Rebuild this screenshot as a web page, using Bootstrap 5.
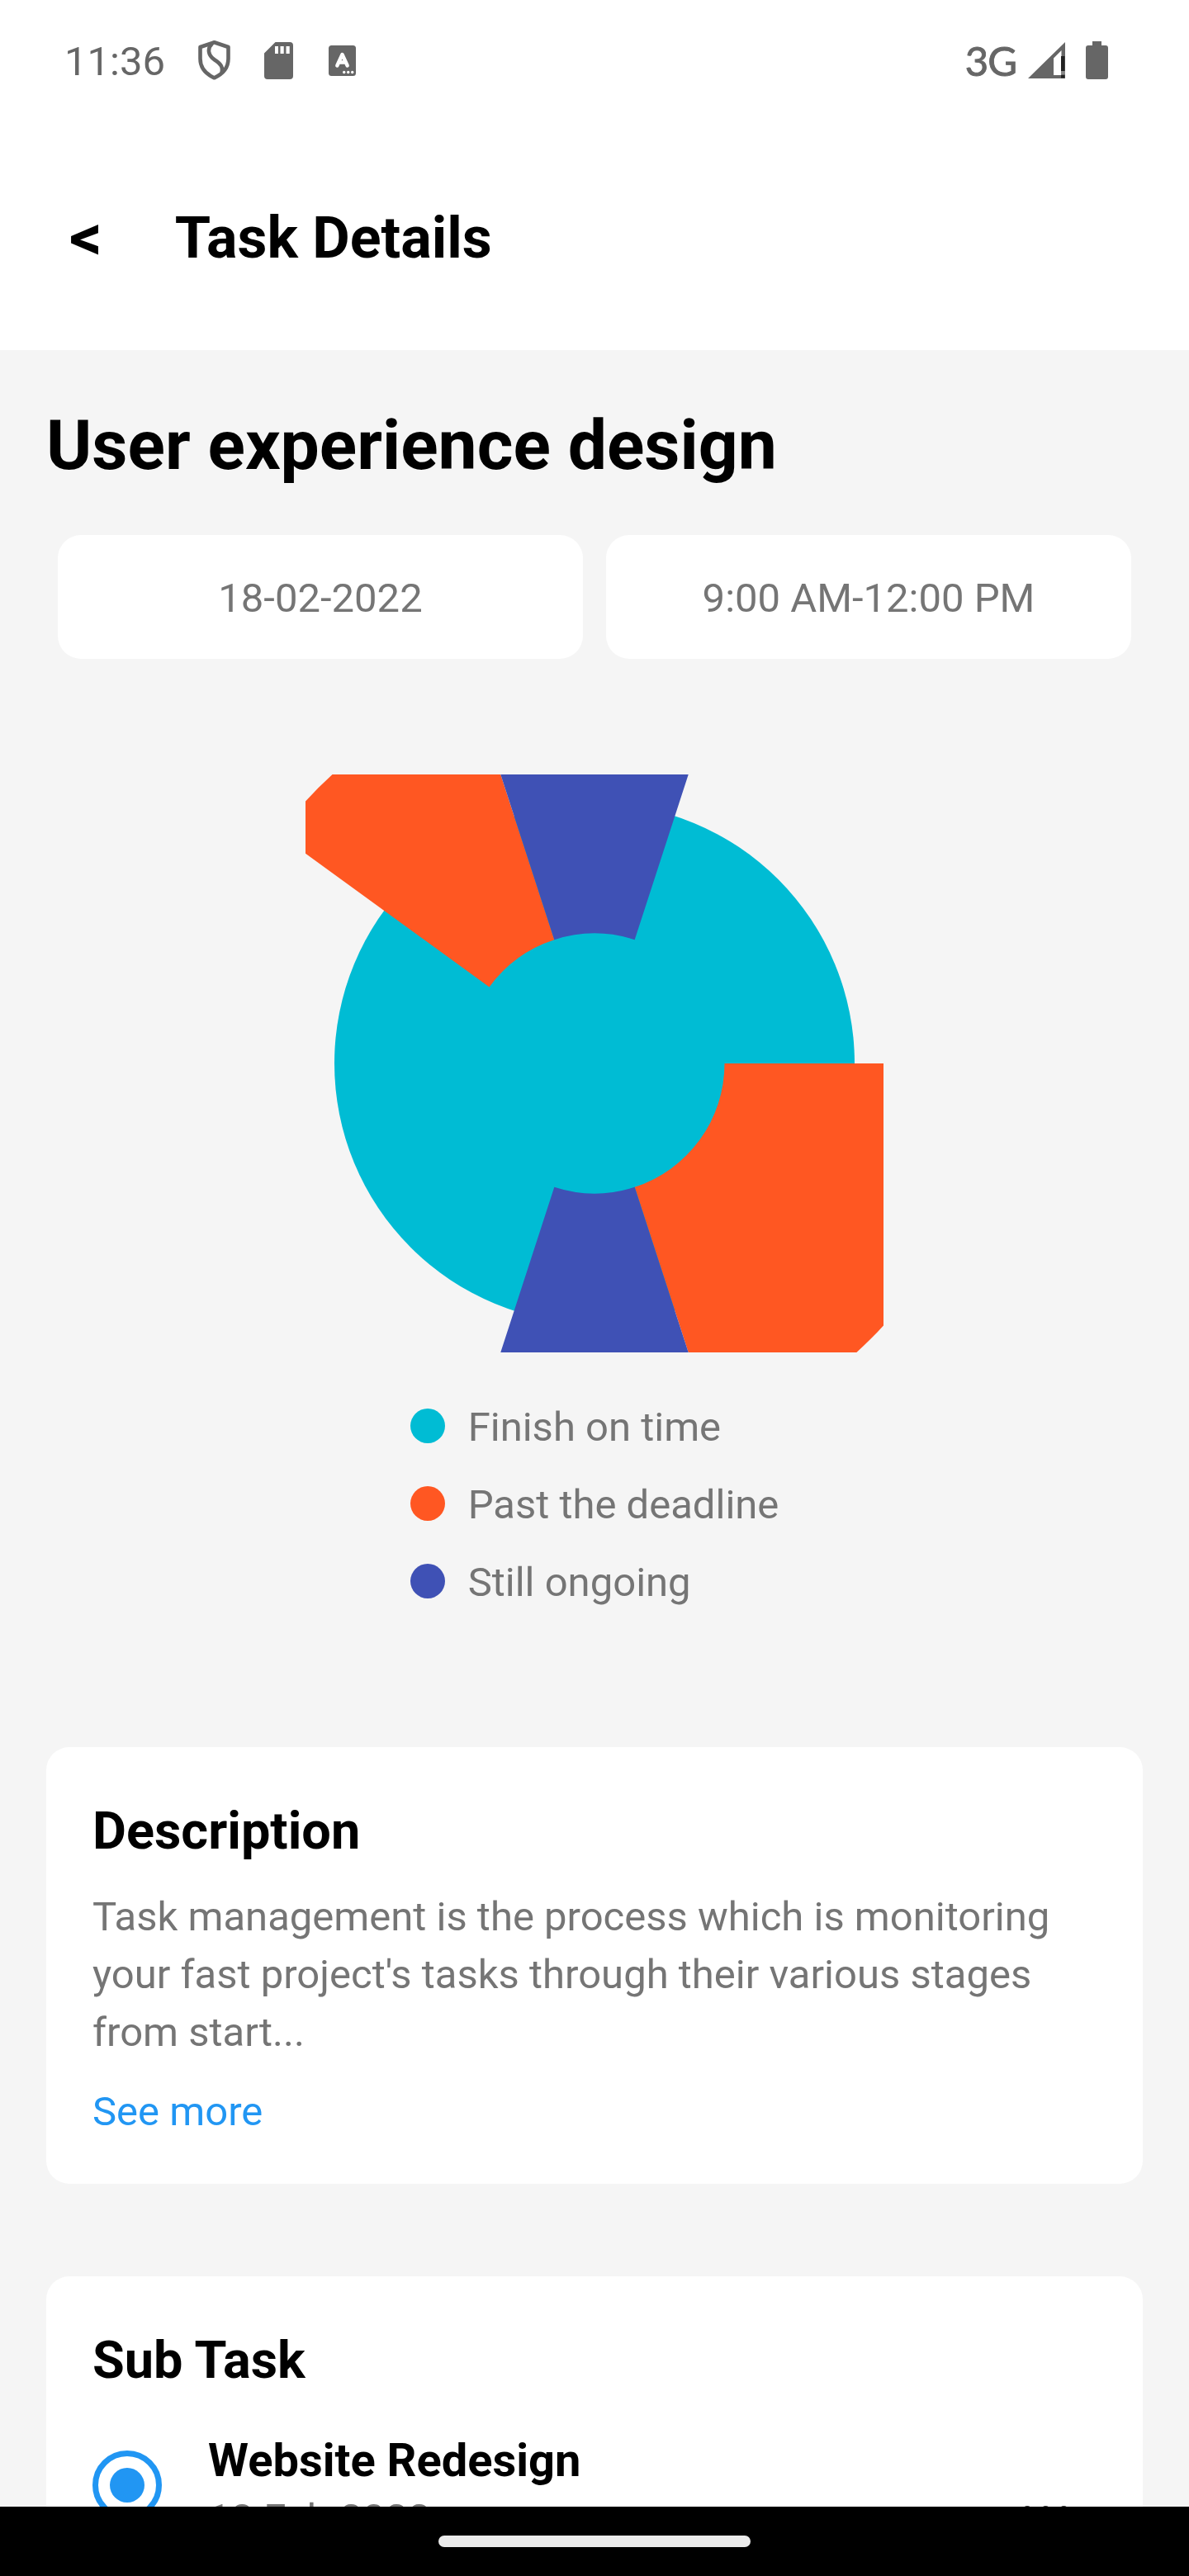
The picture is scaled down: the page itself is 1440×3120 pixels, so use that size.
<!DOCTYPE html>
<html lang="en">
<head>
<meta charset="utf-8">
<meta name="viewport" content="width=device-width, initial-scale=1">
<title>Task Details</title>
<link href="https://cdn.jsdelivr.net/npm/bootstrap@5.3.0/dist/css/bootstrap.min.css" rel="stylesheet">
<style>
  body { font-family: Roboto, "Liberation Sans", sans-serif; color: #000; background: #f5f5f5; font-size: 49px; line-height: 66px; }
  .screen { height: 3120px; overflow: hidden; }
  .status-bar { height: 146px; padding: 0 98px 0 78px; color: #666; }
  .status-icons { padding-left: 39px; gap: 40px; }
  .clock { padding-top: 3px; }
  .net-label { font-family: Lato, sans-serif; font-size: 49px; letter-spacing: -1px; -webkit-text-stroke: .9px #666; margin-right: 14px; }
  .battery { margin-left: 25px; }
  .app-bar { height: 278px; padding: 6px 84px 0; gap: 88px; }
  .app-bar h1 { font-size: 70px; line-height: 84px; }
  .app-bar a { font-size: 78px; line-height: 84px; color: #000; }
  .page-title { font-size: 84px; line-height: 98px; padding: 67px 56px 59px; }
  .chips { padding: 0 70px; gap: 28px; }
  .chip { height: 150px; border-radius: 28px; padding-top: 4px; }
  .muted { color: #757575; }
  .chart { margin-top: 140px; }
  .legend-list { margin: 58px 0 166px; gap: 28px; }
  .legend-list li { gap: 28px; }
  .legend-dot { width: 42px; height: 42px; margin-top: 10px; }
  .panel { margin: 0 56px; padding: 60px 56px; border: 0; border-radius: 28px; --bs-card-color: #000; }
  .panel h2 { font-size: 63px; line-height: 84px; }
  .panel-desc { height: 529px; margin-bottom: 112px; }
  .panel-desc p { line-height: 70px; margin: 27px 0 26px; }
  .see-more { color: #2196f3; line-height: 70px; }
  .panel-sub { height: 700px; }
  .subtask { margin-top: 41px; gap: 56px; }
  .subtask h3 { font-size: 56px; line-height: 76px; }
  .ring { width: 84px; height: 84px; border: 7px solid #2196f3; margin-top: 26px; }
  .ring span { width: 42px; height: 42px; background: #2196f3; }
  .more-dots { font-size: 84px; line-height: 98px; margin-top: 25px; padding-right: 28px; color: #333; }
  .nav-strip { height: 84px; background: #000; }
  .nav-strip span { width: 378px; height: 14px; border-radius: 7px; background: #ebebeb; }
</style>
</head>
<body>
<div class="screen d-flex flex-column">
  <div class="status-bar d-flex align-items-center justify-content-between bg-white flex-shrink-0">
    <div class="d-flex align-items-center">
      <span class="clock">11:36</span>
      <div class="status-icons d-flex align-items-center">
        <svg width="41" height="50" viewBox="0 0 41 50" fill="none" stroke="#666" stroke-width="4.6" stroke-linejoin="round">
          <path d="M20.500 3.300L37.500 9V23C37.500 34 31 41.500 20.500 46.300C10 41.500 3.500 34 3.500 23V9Z"/>
          <path d="M18 4.500C11.500 11 13 19 21 24.500C29.500 30 31 34 29.500 40"/>
        </svg>
        <svg width="35" height="45" viewBox="0 0 35 45" fill="#666">
          <path fill-rule="evenodd" d="M13.500 0H31Q35 0 35 4V41Q35 45 31 45H4Q0 45 0 41V13.500ZM13 5V14H17V5ZM19.500 5V14H23.700V5ZM26.500 5V14H30.700V5Z"/>
        </svg>
        <svg width="37" height="37" viewBox="0 0 37 37">
          <rect x="3" y="0" width="33" height="37" rx="3.500" fill="#666"/>
          <path d="M13.300 24.500L19.500 11L25.700 24.500M15.500 20.500H23.500" fill="none" stroke="#fff" stroke-width="4.400" stroke-linecap="round" stroke-linejoin="round"/>
          <g fill="#fff"><circle cx="21.700" cy="32.500" r="1.700"/><circle cx="26.700" cy="32.500" r="1.700"/><circle cx="31.700" cy="32.500" r="1.700"/></g>
        </svg>
      </div>
    </div>
    <div class="d-flex align-items-center">
      <span class="net-label">3G</span>
      <svg width="45" height="44" viewBox="0 0 45 44">
        <path fill="#666" fill-rule="evenodd" d="M0 44L45 0V44ZM31 19.500V40H40.500V10Z"/>
        <path fill="#222" d="M40 17H44.500V35H40ZM40 39.500H44.500V43.500H40Z"/>
        <path fill="#888" d="M40 35H45V39.500H40Z"/>
      </svg>
      <svg class="battery" width="27" height="46" viewBox="0 0 27 46" fill="#666"><path d="M8 0H19V5H24Q27 5 27 8V43Q27 46 24 46H3Q0 46 0 43V8Q0 5 3 5H8Z"/></svg>
    </div>
  </div>

  <header class="app-bar d-flex align-items-center bg-white flex-shrink-0">
    <a href="#" class="fw-bold text-decoration-none" aria-label="Back">&lt;</a>
    <h1 class="fw-bold mb-0">Task Details</h1>
  </header>

  <main class="flex-grow-1 overflow-hidden">
    <h2 class="page-title fw-bold mb-0">User experience design</h2>
    <div class="chips d-flex">
      <div class="chip muted bg-white flex-fill w-50 d-flex align-items-center justify-content-center">18-02-2022</div>
      <div class="chip muted bg-white flex-fill w-50 d-flex align-items-center justify-content-center">9:00 AM-12:00 PM</div>
    </div>

    <svg class="chart d-block mx-auto" width="700" height="700" viewBox="-350 -350 700 700">
      <circle r="315" fill="#00bcd4"/>
      <path fill="#ff5722" d="M157.500 0H472.500A472.500 472.500 0 0 1 146.010 449.370L48.670 149.790A157.500 157.500 0 0 0 157.500 0Z"/>
      <path fill="#3f51b5" d="M48.670 149.790L146.010 449.370A472.500 472.500 0 0 1 -146.010 449.370L-48.670 149.790A157.500 157.500 0 0 0 48.670 149.790Z"/>
      <path fill="#ff5722" d="M-127.420 -92.580L-382.260 -277.730A472.500 472.500 0 0 1 -146.010 -449.370L-48.670 -149.790A157.500 157.500 0 0 0 -127.420 -92.580Z"/>
      <path fill="#3f51b5" d="M-48.670 -149.790L-146.010 -449.370A472.500 472.500 0 0 1 146.010 -449.370L48.670 -149.790A157.500 157.500 0 0 0 -48.670 -149.790Z"/>
    </svg>

    <div class="d-flex justify-content-center">
      <ul class="legend-list list-unstyled d-flex flex-column muted">
        <li class="d-flex"><span class="legend-dot rounded-circle" style="background:#00bcd4"></span>Finish on time</li>
        <li class="d-flex"><span class="legend-dot rounded-circle" style="background:#ff5722"></span>Past the deadline</li>
        <li class="d-flex"><span class="legend-dot rounded-circle" style="background:#3f51b5"></span>Still ongoing</li>
      </ul>
    </div>

    <section class="card panel panel-desc">
      <h2 class="fw-bold mb-0">Description</h2>
      <p class="muted">Task management is the process which is monitoring<br>your fast project's tasks through their various stages<br>from start...</p>
      <a href="#" class="see-more text-decoration-none">See more</a>
    </section>

    <section class="card panel panel-sub">
      <h2 class="fw-bold mb-0">Sub Task</h2>
      <div class="subtask d-flex align-items-start">
        <div class="ring rounded-circle d-flex align-items-center justify-content-center"><span class="rounded-circle"></span></div>
        <div class="flex-grow-1">
          <h3 class="fw-bold mb-0">Website Redesign</h3>
          <div class="muted">18 Feb 2022</div>
        </div>
        <div class="more-dots">...</div>
      </div>
    </section>
  </main>

  <div class="nav-strip d-flex align-items-center justify-content-center flex-shrink-0"><span></span></div>
</div>
<script src="https://cdn.jsdelivr.net/npm/bootstrap@5.3.0/dist/js/bootstrap.bundle.min.js"></script>
</body>
</html>
